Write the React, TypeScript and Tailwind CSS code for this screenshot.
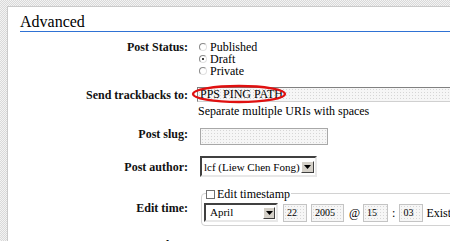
import React from 'react';

const serif = { fontFamily: '"Liberation Serif", "Times New Roman", serif' };

function Radio({ checked }: { checked?: boolean }) {
  return (
    <span className="relative inline-block w-[8px] h-[8px] rounded-full border border-[#8a8a8a] border-b-[#e0e0e0] border-r-[#e0e0e0] bg-white mr-[3px] shrink-0">
      {checked && (
        <span className="absolute left-[2px] top-[2px] w-[2px] h-[2px] rounded-full bg-black" />
      )}
    </span>
  );
}

function DropButton({ className }: { className: string }) {
  return (
    <span
      className={`flex items-center justify-center bg-[#d4d0c8] border border-t-white border-l-white border-r-[#404040] border-b-[#404040] ${className}`}
    >
      <svg width="7" height="4" viewBox="0 0 7 4">
        <path d="M0 0h7L3.5 4z" fill="#000" />
      </svg>
    </span>
  );
}

function SmallBox({ value, w }: { value: string; w: string }) {
  return (
    <span
      className={`inline-flex items-center h-[18px] ${w} px-[3px] text-[10px] border border-[#c4c4c4] bg-[#f6f6f6] bg-[radial-gradient(#d6d6d6_0.5px,transparent_0.6px)] bg-[length:3px_3px]`}
    >
      {value}
    </span>
  );
}

function Label({ children }: { children: React.ReactNode }) {
  return (
    <div className="w-[180px] shrink-0 text-right font-bold text-[12px] leading-[12px] text-[#111]">
      {children}
    </div>
  );
}

export default function App() {
  return (
    <div
      style={serif}
      className="w-[450px] h-[241px] overflow-hidden pt-[6px] pl-[7px] bg-[repeating-conic-gradient(#d9d9d9_0%_25%,#f3f3f3_0%_50%)] bg-[length:2px_2px] text-black"
    >
      <div className="h-[260px] w-[460px] bg-white border-t border-l border-[#c9c9c9]">
        <h2 className="ml-[12px] mt-[6px] text-[16px] leading-[18px] font-normal border-b border-[#2f72d4]">
          Advanced
        </h2>

        {/* Post Status */}
        <div className="flex mt-[9px]">
          <Label>Post Status:</Label>
          <div className="ml-[11px] flex flex-col text-[12px] leading-[12px]">
            <div className="flex items-center"><Radio />Published</div>
            <div className="flex items-center"><Radio checked />Draft</div>
            <div className="flex items-center"><Radio />Private</div>
          </div>
        </div>

        {/* Trackbacks */}
        <div className="flex mt-[10px] items-center">
          <Label>Send trackbacks to:</Label>
          <div className="relative ml-[9px] flex-1">
            <div className="h-[15px] border border-t-[#808080] border-l-[#808080] border-r-[#d0d0d0] border-b-[#d0d0d0] bg-[#f6f6f6] bg-[radial-gradient(#d6d6d6_0.5px,transparent_0.6px)] bg-[length:3px_3px] pl-[2px] text-[12px] leading-[13px]">
              PPS PING PATH
            </div>
            <svg className="absolute left-[-6px] top-[-3px]" width="98" height="20" viewBox="0 0 98 20">
              <ellipse cx="48" cy="10" rx="46" ry="8" fill="none" stroke="#e01010" strokeWidth="2.4" />
            </svg>
          </div>
        </div>
        <div className="ml-[190px] mt-[3px] text-[12px] leading-[12px]">
          Separate multiple URIs with spaces
        </div>

        {/* Post slug */}
        <div className="flex mt-[11px] items-start">
          <div className="pt-[0px]">
            <Label>Post slug:</Label>
          </div>
          <div className="ml-[12px] w-[128px] h-[17px] border border-[#a8a8a8] bg-[#f6f6f6] bg-[radial-gradient(#d6d6d6_0.5px,transparent_0.6px)] bg-[length:3px_3px]" />
        </div>

        {/* Post author */}
        <div className="flex mt-[11px] items-center">
          <Label>Post author:</Label>
          <div className="ml-[12px] w-[117px] h-[21px] flex items-center border-2 border-t-[#404040] border-l-[#404040] border-r-[#e8e8e8] border-b-[#e8e8e8] bg-white">
            <span className="flex-1 pl-[2px] text-[11px] leading-[12px] whitespace-nowrap overflow-hidden">lcf (Liew Chen Fong)</span>
            <DropButton className="w-[13px] h-[12px] mr-[1px] shrink-0" />
          </div>
        </div>

        {/* Edit time */}
        <div className="flex mt-[13px] items-center">
          <Label>Edit time:</Label>
          <div className="ml-[13px] flex-1 relative">
            <div className="border border-[#d2d2d2] rounded-[4px] pt-[9px] pb-[3px] pl-[2px] mt-[3px]">
              <div className="flex items-center text-[10px] whitespace-nowrap">
                <div className="w-[74px] h-[19px] flex items-center border-2 border-t-[#404040] border-l-[#404040] border-r-[#e8e8e8] border-b-[#e8e8e8] bg-white">
                  <span className="flex-1 pl-[4px] text-[11px]">April</span>
                  <DropButton className="w-[12px] h-[12px] mr-[1px]" />
                </div>
                <span className="ml-[5px]"><SmallBox value="22" w="w-[24px]" /></span>
                <span className="ml-[4px]"><SmallBox value="2005" w="w-[33px]" /></span>
                <span className="ml-[5px] text-[12px]">@</span>
                <span className="ml-[3px]"><SmallBox value="15" w="w-[25px]" /></span>
                <span className="ml-[4px] text-[12px]">:</span>
                <span className="ml-[4px]"><SmallBox value="03" w="w-[24px]" /></span>
                <span className="ml-[3px] text-[12px]">Existing timestamp</span>
              </div>
            </div>
            <div className="absolute left-[5px] top-[-2px] flex items-center bg-white pr-[1px] text-[12px] leading-[12px]">
              <span className="w-[9px] h-[9px] border border-[#707070] bg-white mr-[2px]" />
              Edit timestamp
            </div>
          </div>
        </div>

        <div className="flex mt-[13px]">
          <Label>Delete:</Label>
        </div>
      </div>
    </div>
  );
}
